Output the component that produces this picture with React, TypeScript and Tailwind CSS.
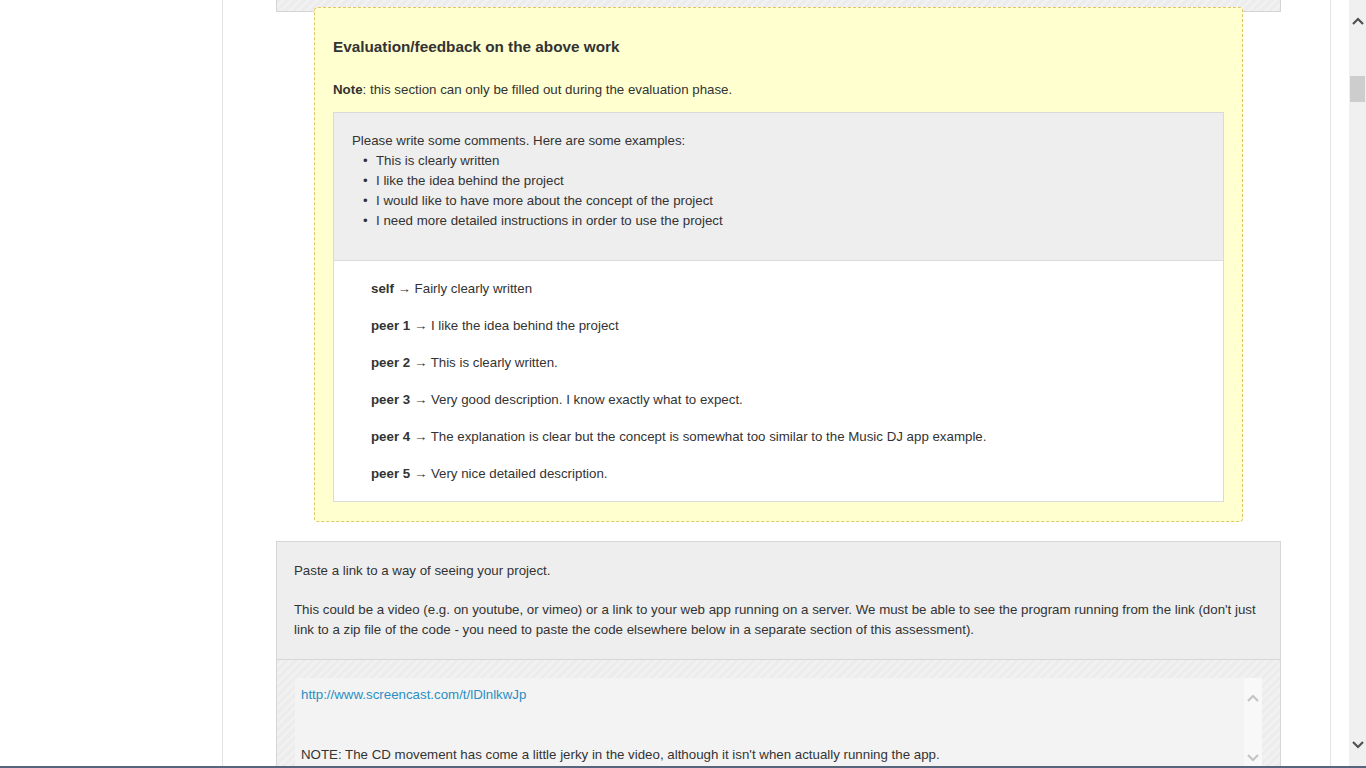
import React from 'react';

const examples = [
  'This is clearly written',
  'I like the idea behind the project',
  'I would like to have more about the concept of the project',
  'I need more detailed instructions in order to use the project',
];

const feedback = [
  { who: 'self', text: 'Fairly clearly written' },
  { who: 'peer 1', text: 'I like the idea behind the project' },
  { who: 'peer 2', text: 'This is clearly written.' },
  { who: 'peer 3', text: 'Very good description. I know exactly what to expect.' },
  { who: 'peer 4', text: 'The explanation is clear but the concept is somewhat too similar to the Music DJ app example.' },
  { who: 'peer 5', text: 'Very nice detailed description.' },
];

const hatch =
  'bg-[repeating-linear-gradient(135deg,#ececec_0px,#ececec_3px,#f1f1f1_3px,#f1f1f1_6px)]';

const Chevron: React.FC<{ up?: boolean; className?: string }> = ({ up, className }) => (
  <svg width="12" height="8" viewBox="0 0 12 8" className={className}>
    <polyline
      points={up ? '1,7 6,2 11,7' : '1,1 6,6 11,1'}
      fill="none"
      stroke="currentColor"
      strokeWidth="2.2"
    />
  </svg>
);

const App: React.FC = () => {
  return (
    <div className="flex flex-col w-[1366px] h-[768px] overflow-hidden bg-white text-[13.3px] leading-[20px] text-[#333] font-['Liberation_Sans',Arial,sans-serif]">
      <div className="flex h-[766px]">
        {/* left gutter */}
        <div className="w-[222px] shrink-0" />

        {/* main column */}
        <div className="w-[1109px] shrink-0 border-x border-[#e4e4e4] pl-[53px] pr-[49px]">
          {/* end of previous section */}
          <div className={`h-[12px] border-x border-b border-[#d4d4d4] ${hatch}`} />

          {/* evaluation box */}
          <div className="relative -mt-[5px] mx-[38px] rounded-[4px] border border-dashed border-[#e2c565] bg-[#ffffd0] px-[18px] pt-[30px] pb-[19px]">
            <h3 className="text-[15.3px] leading-[18px] font-bold text-[#333]">Evaluation/feedback on the above work</h3>
            <p className="mt-[25px] leading-[18px]">
              <span className="font-bold">Note</span>: this section can only be filled out during the evaluation phase.
            </p>

            <div className="mt-[13px] border border-[#dadada]">
              <div className="bg-[#eeeeee] border-b border-[#dadada] pl-[18px] pt-[18px] pb-[29px]">
                <div>Please write some comments. Here are some examples:</div>
                {examples.map((ex) => (
                  <div key={ex} className="flex pl-[11px]">
                    <span className="w-[13px]">•</span>
                    <span>{ex}</span>
                  </div>
                ))}
              </div>
              <div className="bg-white pl-[37px] pt-[18px] pb-[17px] flex flex-col gap-[17px]">
                {feedback.map((f) => (
                  <div key={f.who}>
                    <span className="font-bold">{f.who}</span> → {f.text}
                  </div>
                ))}
              </div>
            </div>
          </div>

          {/* link section */}
          <div className="mt-[19px] border border-[#d6d6d6]">
            <div className="bg-[#eeeeee] border-b border-[#d6d6d6] pl-[17px] pr-[12px] pt-[19px] pb-[19px]">
              <p>Paste a link to a way of seeing your project.</p>
              <p className="mt-[19px]">
                This could be a video (e.g. on youtube, or vimeo) or a link to your web app running on a server. We must be able to see the program running from the link (don't just
                <br />
                link to a zip file of the code - you need to paste the code elsewhere below in a separate section of this assessment).
              </p>
            </div>
            <div className={`${hatch} px-[18px] pt-[18px] pb-[18px]`}>
              <div className="flex h-[120px] bg-[#f3f3f3]">
                <div className="flex-1 pl-[6px] pt-[7px]">
                  <div className="text-[#2a8fc2]">http://www.screencast.com/t/lDlnlkwJp</div>
                  <div className="h-[20px]" />
                  <div className="h-[20px]" />
                  <div>NOTE: The CD movement has come a little jerky in the video, although it isn't when actually running the app.</div>
                </div>
                <div className="w-[18px] bg-[#f8f8f8] flex flex-col items-center pt-[16px] text-[#c4c4c4]">
                  <Chevron up />
                  <div className="h-[52px]" />
                  <Chevron />
                </div>
              </div>
            </div>
          </div>
        </div>

        {/* right gutter */}
        <div className="w-[18px] shrink-0" />

        {/* browser scrollbar */}
        <div className="w-[17px] shrink-0 bg-[#f0f0f0] flex flex-col items-center text-[#505050]">
          <Chevron up className="mt-[17px]" />
          <div className="mt-[51px] w-[15px] h-[26px] bg-[#cdcdcd]" />
          <div className="flex-1" />
          <Chevron className="mb-[17px]" />
        </div>
      </div>
      <div className="h-[2px] bg-[#56657c]" />
    </div>
  );
};

export default App;
